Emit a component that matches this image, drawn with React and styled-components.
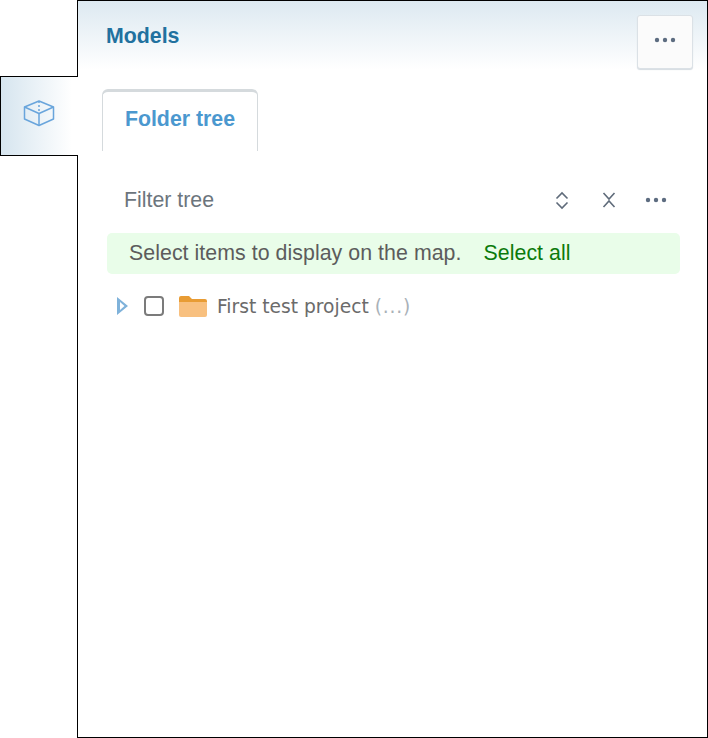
import React from 'react'
import styled, { createGlobalStyle } from 'styled-components'

const GlobalStyle = createGlobalStyle`
  html, body {
    margin: 0;
    padding: 0;
    background: #fff;
  }
  * {
    box-sizing: border-box;
  }
`

function CubeIcon() {
  return (
    <svg width="32" height="27" viewBox="0 0 32 27" fill="none" stroke="#69a5dc" strokeWidth="1.5" strokeLinejoin="round">
      <path d="M16 1 L30.5 7 V19 L16 25.5 L1.5 19 V7 Z" />
      <path d="M1.5 7 L16 13.5 L30.5 7" />
      <path d="M16 13.5 V25.5" />
      <path d="M16 1 V13.5" strokeDasharray="2 2" />
    </svg>
  )
}

function ExpandIcon() {
  return (
    <svg width="14" height="19" viewBox="0 0 14 19" fill="none" stroke="#5f6b7a" strokeWidth="1.6">
      <path d="M1.5 7.5 L7 2 L12.5 7.5" />
      <path d="M1.5 11.5 L7 17 L12.5 11.5" />
    </svg>
  )
}

function CollapseIcon() {
  return (
    <svg width="14" height="18" viewBox="0 0 14 18" fill="none" stroke="#5f6b7a" strokeWidth="1.6">
      <path d="M1.5 2 L7 8 L12.5 2" />
      <path d="M1.5 16 L7 10 L12.5 16" />
    </svg>
  )
}

function DotsIcon() {
  return (
    <svg width="22" height="6" viewBox="0 0 22 6" fill="#5d6c80">
      <circle cx="3" cy="3" r="2.2" />
      <circle cx="11" cy="3" r="2.2" />
      <circle cx="19" cy="3" r="2.2" />
    </svg>
  )
}

function FolderIcon() {
  return (
    <svg width="30" height="22" viewBox="0 0 30 22">
      <path d="M1 3 Q1 1 3 1 H11 L14 4 H27 Q29 4 29 6 V8 H1 Z" fill="#e89c34" />
      <path d="M1 7 H29 V20 Q29 22 27 22 H3 Q1 22 1 20 Z" fill="#f8c07f" />
    </svg>
  )
}

function App() {
  return (
    <>
      <GlobalStyle />
      <Page>
        <Rail>
          <RailTab>
            <CubeIcon />
          </RailTab>
        </Rail>
        <Panel>
          <Header>
            <Title>Models</Title>
            <MenuButton>
              <DotsIcon />
            </MenuButton>
          </Header>
          <Tabs>
            <Tab>Folder tree</Tab>
          </Tabs>
          <Toolbar>
            <FilterLabel>Filter tree</FilterLabel>
            <ToolIcons>
              <ToolIcon><ExpandIcon /></ToolIcon>
              <ToolIcon><CollapseIcon /></ToolIcon>
              <ToolIcon><DotsIcon /></ToolIcon>
            </ToolIcons>
          </Toolbar>
          <Notice>
            Select items to display on the map.
            <SelectAll>Select all</SelectAll>
          </Notice>
          <TreeRow>
            <Caret />
            <Checkbox />
            <FolderIcon />
            <NodeName>First test project <NodeCount>(...)</NodeCount></NodeName>
          </TreeRow>
        </Panel>
      </Page>
    </>
  )
}

export default App

const Page = styled.div`
  display: flex;
  width: 708px;
  height: 738px;
  font-family: 'Liberation Sans', Arial, sans-serif;
`
const Rail = styled.div`
  width: 77px;
  flex-shrink: 0;
  padding-top: 76px;
`
const RailTab = styled.div`
  position: relative;
  z-index: 1;
  width: 78px;
  height: 80px;
  display: flex;
  align-items: center;
  justify-content: center;
  padding: 0 2px 6px 0;
  border: 1px solid #000;
  border-right: none;
  background: linear-gradient(to right, #d6e5ef, #ffffff 92%);
`
const Panel = styled.div`
  flex: 1;
  border: 1px solid #000;
`
const Header = styled.div`
  height: 69px;
  display: flex;
  justify-content: space-between;
  padding: 14px 14px 0 28px;
  background: linear-gradient(to bottom, #dde9f1, #ffffff);
`
const Title = styled.h1`
  margin: 8px 0 0;
  font-size: 21.33px;
  line-height: 26px;
  font-weight: 700;
  color: #21719f;
`
const MenuButton = styled.button`
  width: 56px;
  height: 54px;
  padding: 0 1px 5px 0;
  display: flex;
  align-items: center;
  justify-content: center;
  background: #fbfbfb;
  border: 1px solid #dbe1e6;
  border-radius: 3px;
  box-shadow: 0 1px 1px #d5dce2;
`
const Tabs = styled.div`
  display: flex;
  padding: 19px 0 0 24px;
`
const Tab = styled.div`
  width: 156px;
  height: 62px;
  padding-top: 14px;
  text-align: center;
  font-size: 21.33px;
  line-height: 26px;
  font-weight: 700;
  color: #4b98cf;
  border: 1px solid #d5dadd;
  border-top: 3px solid #d5dadd;
  border-bottom: none;
  border-radius: 6px 6px 0 0;
`
const Toolbar = styled.div`
  display: flex;
  align-items: center;
  justify-content: space-between;
  height: 40px;
  margin-top: 29px;
  padding: 0 39px 0 46px;
`
const FilterLabel = styled.span`
  font-size: 21.33px;
  color: #6c757d;
`
const ToolIcons = styled.div`
  display: flex;
  align-items: center;
  gap: 23px;
`
const ToolIcon = styled.span`
  display: flex;
  align-items: center;
  justify-content: center;
  width: 24px;
  height: 24px;
`
const Notice = styled.div`
  display: flex;
  align-items: center;
  height: 41px;
  margin: 13px 27px 0 29px;
  padding-left: 22px;
  font-size: 21.33px;
  letter-spacing: 0.05px;
  color: #5c5c5c;
  background: #e9fde9;
  border-radius: 5px;
`
const SelectAll = styled.span`
  margin-left: 22px;
  color: #0b7a0b;
`
const TreeRow = styled.div`
  display: flex;
  align-items: center;
  height: 30px;
  margin-top: 17px;
  padding-left: 39px;
`
const Caret = styled.span`
  width: 11px;
  height: 18px;
  margin-right: 16px;
  background: #7fb2da;
  clip-path: polygon(0 0, 100% 50%, 0 100%, 0 0, 3px 5px, 3px 13px, 7.5px 9px, 3px 5px);
`
const Checkbox = styled.span`
  width: 20px;
  height: 20px;
  margin-right: 14px;
  border: 2px solid #7b7b7b;
  border-radius: 4px;
  background: #fff;
`
const NodeName = styled.span`
  margin-left: 9px;
  font-family: 'DejaVu Sans', Verdana, sans-serif;
  font-size: 18.67px;
  color: #6b6b6b;
  white-space: pre;
`
const NodeCount = styled.span`
  letter-spacing: 0.8px;
  color: #a9b1b8;
`
